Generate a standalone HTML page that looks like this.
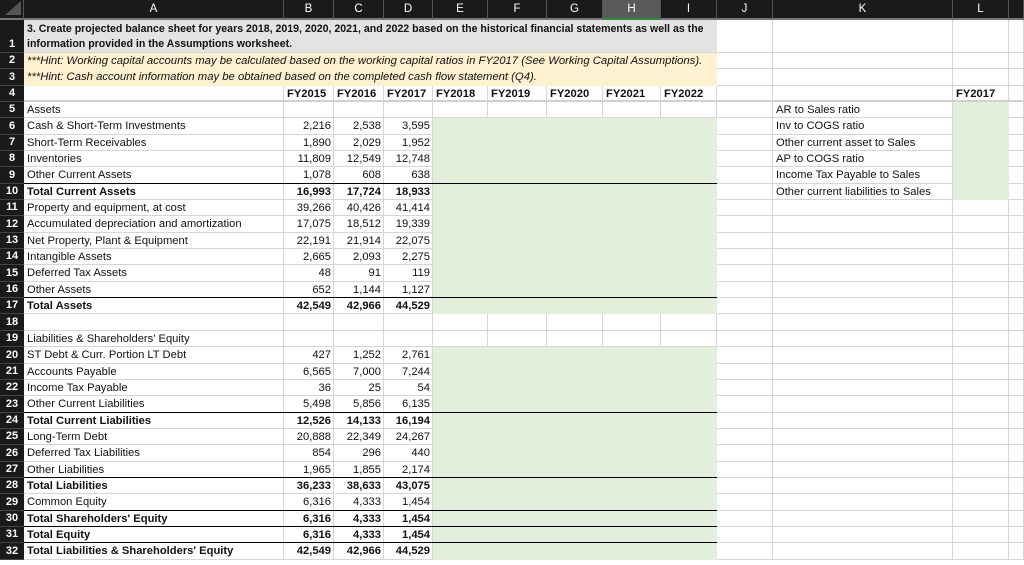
<!DOCTYPE html>
<html><head><meta charset="utf-8"><style>
*{margin:0;padding:0;box-sizing:border-box}
body{width:1024px;height:565px;overflow:hidden;background:#fff;font-family:"Liberation Sans",sans-serif;font-size:11.2px;color:#111}
.g{display:grid;width:1024px;height:565px;grid-template-columns:24px 260px 50px 50px 49px 55px 59px 56px 58px 56px 56px 180px 56px 15px;grid-template-rows:20px 33px 16px 17px 16px repeat(28,16.357px)}
.hr{grid-column:2/-1;border-bottom:1px solid #d6d6d6}
.vc{grid-row:2/-1;border-right:1px solid #d6d6d6}
.rn{grid-column:1;background:#1a1a1a;color:#fff;font-weight:bold;font-size:11px;text-align:center;line-height:16px;display:flex;align-items:flex-end;justify-content:center;border-bottom:1px solid #444}
.ch{grid-row:1;background:#1a1a1a;color:#fff;text-align:center;line-height:19px;font-size:11.5px;border-right:1px solid #555;border-bottom:2px solid #777}
.t{padding:0 3px;line-height:16px;white-space:nowrap;overflow:visible}
.n{text-align:right;padding:0 3px 0 0;line-height:16px;white-space:nowrap}
.b{font-weight:bold}
.ln{grid-column:2/11;align-self:end;border-bottom:1.3px solid #000;height:0}
.gr{background:#e2efda}
</style></head><body><div class="g">
<div class="vc" style="grid-column:2"></div><div class="vc" style="grid-column:3"></div><div class="vc" style="grid-column:4"></div><div class="vc" style="grid-column:5"></div><div class="vc" style="grid-column:6"></div><div class="vc" style="grid-column:7"></div><div class="vc" style="grid-column:8"></div><div class="vc" style="grid-column:9"></div><div class="vc" style="grid-column:10"></div><div class="vc" style="grid-column:11"></div><div class="vc" style="grid-column:12"></div><div class="vc" style="grid-column:13"></div><div class="vc" style="grid-column:14"></div>
<div class="hr" style="grid-row:2"></div><div class="hr" style="grid-row:3"></div><div class="hr" style="grid-row:4"></div><div class="hr" style="grid-row:5;border-bottom:2px solid #d0d0d0"></div><div class="hr" style="grid-row:6"></div><div class="hr" style="grid-row:7"></div><div class="hr" style="grid-row:8"></div><div class="hr" style="grid-row:9"></div><div class="hr" style="grid-row:10"></div><div class="hr" style="grid-row:11"></div><div class="hr" style="grid-row:12"></div><div class="hr" style="grid-row:13"></div><div class="hr" style="grid-row:14"></div><div class="hr" style="grid-row:15"></div><div class="hr" style="grid-row:16"></div><div class="hr" style="grid-row:17"></div><div class="hr" style="grid-row:18"></div><div class="hr" style="grid-row:19"></div><div class="hr" style="grid-row:20"></div><div class="hr" style="grid-row:21"></div><div class="hr" style="grid-row:22"></div><div class="hr" style="grid-row:23"></div><div class="hr" style="grid-row:24"></div><div class="hr" style="grid-row:25"></div><div class="hr" style="grid-row:26"></div><div class="hr" style="grid-row:27"></div><div class="hr" style="grid-row:28"></div><div class="hr" style="grid-row:29"></div><div class="hr" style="grid-row:30"></div><div class="hr" style="grid-row:31"></div><div class="hr" style="grid-row:32"></div><div class="hr" style="grid-row:33"></div>
<div style="grid-row:2;grid-column:2/11;background:#e3e3e3;border-bottom:1px solid #d6d6d6"></div>
<div style="grid-row:3/5;grid-column:2/11;background:#fdf1cf"></div>
<div class="gr" style="grid-row:7/19;grid-column:6/11"></div>
<div class="gr" style="grid-row:21/34;grid-column:6/11"></div>
<div class="gr" style="grid-row:6/12;grid-column:13"></div>
<div style="grid-row:1;grid-column:1;background:#1a1a1a;border-right:1px solid #555;border-bottom:2px solid #777;position:relative"><div style="position:absolute;right:2px;bottom:3px;width:0;height:0;border-left:16px solid transparent;border-bottom:14px solid #555"></div></div>
<div class="ch" style="grid-column:2">A</div><div class="ch" style="grid-column:3">B</div><div class="ch" style="grid-column:4">C</div><div class="ch" style="grid-column:5">D</div><div class="ch" style="grid-column:6">E</div><div class="ch" style="grid-column:7">F</div><div class="ch" style="grid-column:8">G</div><div class="ch" style="grid-column:9;background:#5a5a5a;border-bottom:2px solid #2f8a3a">H</div><div class="ch" style="grid-column:10">I</div><div class="ch" style="grid-column:11">J</div><div class="ch" style="grid-column:12">K</div><div class="ch" style="grid-column:13">L</div><div class="ch" style="grid-column:14"></div>
<div style="grid-column:1;grid-row:2/-1;background:#1a1a1a"></div>
<div class="rn" style="grid-row:2">1</div><div class="rn" style="grid-row:3">2</div><div class="rn" style="grid-row:4">3</div><div class="rn" style="grid-row:5">4</div><div class="rn" style="grid-row:6">5</div><div class="rn" style="grid-row:7">6</div><div class="rn" style="grid-row:8">7</div><div class="rn" style="grid-row:9">8</div><div class="rn" style="grid-row:10">9</div><div class="rn" style="grid-row:11">10</div><div class="rn" style="grid-row:12">11</div><div class="rn" style="grid-row:13">12</div><div class="rn" style="grid-row:14">13</div><div class="rn" style="grid-row:15">14</div><div class="rn" style="grid-row:16">15</div><div class="rn" style="grid-row:17">16</div><div class="rn" style="grid-row:18">17</div><div class="rn" style="grid-row:19">18</div><div class="rn" style="grid-row:20">19</div><div class="rn" style="grid-row:21">20</div><div class="rn" style="grid-row:22">21</div><div class="rn" style="grid-row:23">22</div><div class="rn" style="grid-row:24">23</div><div class="rn" style="grid-row:25">24</div><div class="rn" style="grid-row:26">25</div><div class="rn" style="grid-row:27">26</div><div class="rn" style="grid-row:28">27</div><div class="rn" style="grid-row:29">28</div><div class="rn" style="grid-row:30">29</div><div class="rn" style="grid-row:31">30</div><div class="rn" style="grid-row:32">31</div><div class="rn" style="grid-row:33">32</div>
<div class="ln" style="grid-row:10"></div><div class="ln" style="grid-row:17"></div><div class="ln" style="grid-row:24"></div><div class="ln" style="grid-row:28"></div><div class="ln" style="grid-row:30"></div><div class="ln" style="grid-row:31"></div><div class="ln" style="grid-row:32"></div>
<div class="t b" style="grid-row:2;grid-column:2/11;line-height:15px;padding-top:2px;font-size:10.6px">3. Create projected balance sheet for years 2018, 2019, 2020, 2021, and 2022 based on the historical financial statements as well as the<br>information provided in the Assumptions worksheet.</div>
<div class="t" style="grid-row:3;grid-column:2/11;font-style:italic;font-size:11.3px">***Hint: Working capital accounts may be calculated based on the working capital ratios in FY2017 (See Working Capital Assumptions).</div>
<div class="t" style="grid-row:4;grid-column:2/11;font-style:italic;line-height:17px;font-size:11.3px">***Hint: Cash account information may be obtained based on the completed cash flow statement (Q4).</div>
<div class="t b" style="grid-row:5;grid-column:3">FY2015</div><div class="t b" style="grid-row:5;grid-column:4">FY2016</div><div class="t b" style="grid-row:5;grid-column:5">FY2017</div><div class="t b" style="grid-row:5;grid-column:6">FY2018</div><div class="t b" style="grid-row:5;grid-column:7">FY2019</div><div class="t b" style="grid-row:5;grid-column:8">FY2020</div><div class="t b" style="grid-row:5;grid-column:9">FY2021</div><div class="t b" style="grid-row:5;grid-column:10">FY2022</div><div class="t b" style="grid-row:5;grid-column:13">FY2017</div>
<div class="t" style="grid-row:6;grid-column:12">AR to Sales ratio</div><div class="t" style="grid-row:7;grid-column:12">Inv to COGS ratio</div><div class="t" style="grid-row:8;grid-column:12">Other current asset to Sales</div><div class="t" style="grid-row:9;grid-column:12">AP to COGS ratio</div><div class="t" style="grid-row:10;grid-column:12">Income Tax Payable to Sales</div><div class="t" style="grid-row:11;grid-column:12">Other current liabilities to Sales</div>
<div class="t" style="grid-row:6;grid-column:2">Assets</div>
<div class="t" style="grid-row:7;grid-column:2">Cash &amp; Short-Term Investments</div><div class="n" style="grid-row:7;grid-column:3">2,216</div><div class="n" style="grid-row:7;grid-column:4">2,538</div><div class="n" style="grid-row:7;grid-column:5">3,595</div>
<div class="t" style="grid-row:8;grid-column:2">Short-Term Receivables</div><div class="n" style="grid-row:8;grid-column:3">1,890</div><div class="n" style="grid-row:8;grid-column:4">2,029</div><div class="n" style="grid-row:8;grid-column:5">1,952</div>
<div class="t" style="grid-row:9;grid-column:2">Inventories</div><div class="n" style="grid-row:9;grid-column:3">11,809</div><div class="n" style="grid-row:9;grid-column:4">12,549</div><div class="n" style="grid-row:9;grid-column:5">12,748</div>
<div class="t" style="grid-row:10;grid-column:2">Other Current Assets</div><div class="n" style="grid-row:10;grid-column:3">1,078</div><div class="n" style="grid-row:10;grid-column:4">608</div><div class="n" style="grid-row:10;grid-column:5">638</div>
<div class="t b" style="grid-row:11;grid-column:2">Total Current Assets</div><div class="n b" style="grid-row:11;grid-column:3">16,993</div><div class="n b" style="grid-row:11;grid-column:4">17,724</div><div class="n b" style="grid-row:11;grid-column:5">18,933</div>
<div class="t" style="grid-row:12;grid-column:2">Property and equipment, at cost</div><div class="n" style="grid-row:12;grid-column:3">39,266</div><div class="n" style="grid-row:12;grid-column:4">40,426</div><div class="n" style="grid-row:12;grid-column:5">41,414</div>
<div class="t" style="grid-row:13;grid-column:2">Accumulated depreciation and amortization</div><div class="n" style="grid-row:13;grid-column:3">17,075</div><div class="n" style="grid-row:13;grid-column:4">18,512</div><div class="n" style="grid-row:13;grid-column:5">19,339</div>
<div class="t" style="grid-row:14;grid-column:2">Net Property, Plant &amp; Equipment</div><div class="n" style="grid-row:14;grid-column:3">22,191</div><div class="n" style="grid-row:14;grid-column:4">21,914</div><div class="n" style="grid-row:14;grid-column:5">22,075</div>
<div class="t" style="grid-row:15;grid-column:2">Intangible Assets</div><div class="n" style="grid-row:15;grid-column:3">2,665</div><div class="n" style="grid-row:15;grid-column:4">2,093</div><div class="n" style="grid-row:15;grid-column:5">2,275</div>
<div class="t" style="grid-row:16;grid-column:2">Deferred Tax Assets</div><div class="n" style="grid-row:16;grid-column:3">48</div><div class="n" style="grid-row:16;grid-column:4">91</div><div class="n" style="grid-row:16;grid-column:5">119</div>
<div class="t" style="grid-row:17;grid-column:2">Other Assets</div><div class="n" style="grid-row:17;grid-column:3">652</div><div class="n" style="grid-row:17;grid-column:4">1,144</div><div class="n" style="grid-row:17;grid-column:5">1,127</div>
<div class="t b" style="grid-row:18;grid-column:2">Total Assets</div><div class="n b" style="grid-row:18;grid-column:3">42,549</div><div class="n b" style="grid-row:18;grid-column:4">42,966</div><div class="n b" style="grid-row:18;grid-column:5">44,529</div>
<div class="t" style="grid-row:20;grid-column:2">Liabilities &amp; Shareholders' Equity</div>
<div class="t" style="grid-row:21;grid-column:2">ST Debt &amp; Curr. Portion LT Debt</div><div class="n" style="grid-row:21;grid-column:3">427</div><div class="n" style="grid-row:21;grid-column:4">1,252</div><div class="n" style="grid-row:21;grid-column:5">2,761</div>
<div class="t" style="grid-row:22;grid-column:2">Accounts Payable</div><div class="n" style="grid-row:22;grid-column:3">6,565</div><div class="n" style="grid-row:22;grid-column:4">7,000</div><div class="n" style="grid-row:22;grid-column:5">7,244</div>
<div class="t" style="grid-row:23;grid-column:2">Income Tax Payable</div><div class="n" style="grid-row:23;grid-column:3">36</div><div class="n" style="grid-row:23;grid-column:4">25</div><div class="n" style="grid-row:23;grid-column:5">54</div>
<div class="t" style="grid-row:24;grid-column:2">Other Current Liabilities</div><div class="n" style="grid-row:24;grid-column:3">5,498</div><div class="n" style="grid-row:24;grid-column:4">5,856</div><div class="n" style="grid-row:24;grid-column:5">6,135</div>
<div class="t b" style="grid-row:25;grid-column:2">Total Current Liabilities</div><div class="n b" style="grid-row:25;grid-column:3">12,526</div><div class="n b" style="grid-row:25;grid-column:4">14,133</div><div class="n b" style="grid-row:25;grid-column:5">16,194</div>
<div class="t" style="grid-row:26;grid-column:2">Long-Term Debt</div><div class="n" style="grid-row:26;grid-column:3">20,888</div><div class="n" style="grid-row:26;grid-column:4">22,349</div><div class="n" style="grid-row:26;grid-column:5">24,267</div>
<div class="t" style="grid-row:27;grid-column:2">Deferred Tax Liabilities</div><div class="n" style="grid-row:27;grid-column:3">854</div><div class="n" style="grid-row:27;grid-column:4">296</div><div class="n" style="grid-row:27;grid-column:5">440</div>
<div class="t" style="grid-row:28;grid-column:2">Other Liabilities</div><div class="n" style="grid-row:28;grid-column:3">1,965</div><div class="n" style="grid-row:28;grid-column:4">1,855</div><div class="n" style="grid-row:28;grid-column:5">2,174</div>
<div class="t b" style="grid-row:29;grid-column:2">Total Liabilities</div><div class="n b" style="grid-row:29;grid-column:3">36,233</div><div class="n b" style="grid-row:29;grid-column:4">38,633</div><div class="n b" style="grid-row:29;grid-column:5">43,075</div>
<div class="t" style="grid-row:30;grid-column:2">Common Equity</div><div class="n" style="grid-row:30;grid-column:3">6,316</div><div class="n" style="grid-row:30;grid-column:4">4,333</div><div class="n" style="grid-row:30;grid-column:5">1,454</div>
<div class="t b" style="grid-row:31;grid-column:2">Total Shareholders' Equity</div><div class="n b" style="grid-row:31;grid-column:3">6,316</div><div class="n b" style="grid-row:31;grid-column:4">4,333</div><div class="n b" style="grid-row:31;grid-column:5">1,454</div>
<div class="t b" style="grid-row:32;grid-column:2">Total Equity</div><div class="n b" style="grid-row:32;grid-column:3">6,316</div><div class="n b" style="grid-row:32;grid-column:4">4,333</div><div class="n b" style="grid-row:32;grid-column:5">1,454</div>
<div class="t b" style="grid-row:33;grid-column:2">Total Liabilities &amp; Shareholders' Equity</div><div class="n b" style="grid-row:33;grid-column:3">42,549</div><div class="n b" style="grid-row:33;grid-column:4">42,966</div><div class="n b" style="grid-row:33;grid-column:5">44,529</div>
</div></body></html>
